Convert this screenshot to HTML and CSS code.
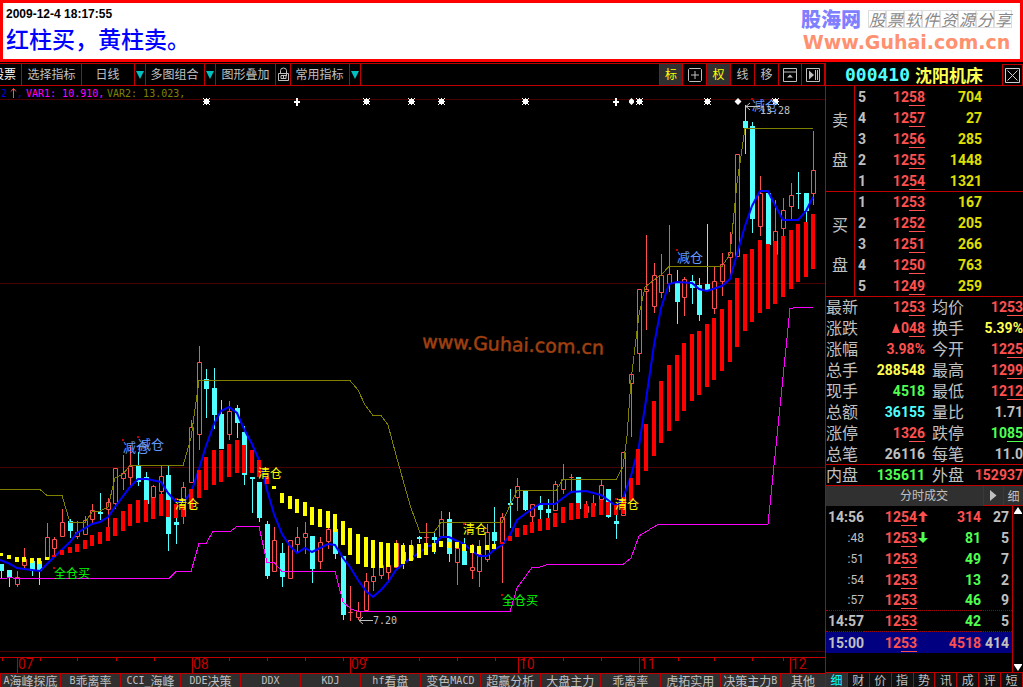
FILE: index.html
```html
<!DOCTYPE html>
<html lang="zh-CN">
<head>
<meta charset="utf-8">
<title>000410 沈阳机床</title>
<link rel="stylesheet" href="styles.css">
</head>
<body>
<header class="banner">
  <div class="note">
    <time class="stamp">2009-12-4 18:17:55</time>
    <h1 class="headline">红柱买，黄柱卖。</h1>
  </div>
  <div class="brand">
    <div class="brand-top"><strong class="brand-name">股海网</strong><span class="brand-boxes"><i>股</i><i>票</i><i>软</i><i>件</i><i>资</i><i>源</i><i>分</i><i>享</i></span></div>
    <div class="brand-url">Www.Guhai.com.cn</div>
  </div>
</header>
<div class="app">
  <main class="left">
    <nav class="toolbar">
      <button class="tool first">股票</button>
      <button class="tool w60">选择指标</button>
      <button class="tool w52">日线</button><button class="drop" aria-label="周期"></button>
      <button class="tool w58">多图组合</button><button class="drop" aria-label="组合"></button>
      <button class="tool w60">图形叠加</button>
      <button class="tool w15" aria-label="锁定"><svg width="13" height="15" viewBox="0 0 13 15"><path d="M3.500 6.500V3.500Q3.500 1 6.500 1T9.500 3.500V9M1.500 6.500H11.500V13.500H1.500ZM4 8.500H9V11.500H4ZM6.500 9V12" fill="none" stroke="#c0c0c0"/></svg></button>
      <button class="tool w58">常用指标</button><button class="drop last-drop" aria-label="指标"></button>
      <span class="spacer"></span>
      <button class="tool sq on edge">标</button>
      <button class="tool sq" aria-label="十字"><svg width="14" height="14" viewBox="0 0 14 14"><path d="M1.500.5H12.500L13.500 1.500V12.500L12.500 13.500H1.500L.5 12.500V1.500ZM7 3V11M3 7H11" fill="none" stroke="#c0c0c0"/></svg></button>
      <button class="tool sq on">权</button>
      <button class="tool sq">线</button>
      <button class="tool sq">移</button>
      <button class="tool sq narrow" aria-label="最大化"><svg width="14" height="14" viewBox="0 0 14 14"><path d="M.5.5H13.500V13.500H.5ZM.5 4H13.500" fill="none" stroke="#c0c0c0"/><path d="M4 9.500L7 6.500L10 9.500Z" fill="#c0c0c0"/></svg></button>
      <button class="tool sq narrow" aria-label="下一个"><svg width="14" height="14" viewBox="0 0 14 14"><path d="M.5.5H13.500V13.500H.5ZM9.500 2V12M11.500 2V12" fill="none" stroke="#c0c0c0"/><path d="M3 2.500L8 7L3 11.500Z" fill="#c0c0c0"/></svg></button>
    </nav>
    <svg class="chart" viewBox="0 86 825 587" role="img" aria-label="K线图">
      <path d="M0 99.500H825M0 283.500H825M0 467.500H825M0 651.500H825" stroke="#480000"/>
      <text class="wm" x="422" y="348" transform="rotate(2 422 348)">www.Guhai.com.cn</text>
      <g id="candles"></g>
      <polyline class="olive" points="0,489.500 40,489.500 47,495.500 62,495.500 70,522.500 85,522.500 92,512 100,511 108,507 115,478 123,474 130,465.500 183,465.500 191,438 199,380.500 350,380.500 358,390 365,405 373,415.500 381,415.500 388,425 396,455 403,480 411,508 420,532.500 434,532.500 441,522.500 502,522.500 517,490.500 556,490.500 563,479.500 616,479.500 623,467 627,436 631,380 639,315 645,287 661,275 669,266.500 722,266.500 730,254 737,183 745,128.500 813,128.500"/>
      <polyline class="blue" points="0,560 8,563 17,568 32,570 40,571 54,557 70,542 77,533 92,524 100,522 108,517 115,507 130,487 138,479 147,479 161,482 168,493 176,502 183,502 191,493 199,469 206,446 214,424 221,411 229,407 237,413 244,429 252,444 259,460 267,490 274,514 282,534 290,546 297,553 305,548 312,552 320,548 328,544 335,545 343,558 350,567 358,580 366,591 373,597 381,590 388,582 396,570 403,564 411,558 419,553 428,546 434,545 441,537 449,537 457,541 464,544 472,551 479,556 487,556 494,550 502,545 510,535 517,520 525,514 532,509 540,504 555,504 563,498 571,492 586,491 601,495 608,500 616,506 623,498 631,476 639,446 646,400 654,345 661,308 669,284 677,282 692,283 699,289 707,291 722,286 730,279 737,254 745,226 752,206 760,191 768,191 775,205 783,220 798,220 806,211 813,197"/>
      <polyline class="magenta" points="0,579 10,577.500 16,578.500 169,578.500 176,571.500 191,571.500 199,543.500 206,543.500 213,531.500 230,531.500 237,526.500 259,526.500 267,562.500 274,562.500 282,571.500 335,571.500 343,602 351,609 358,611.500 510,611.500 517,588 532,567.500 540,567 548,564.500 623,564.500 631,558 639,536 647,531 658,524.500 768,524.500 790,308.500 796,307.500 813,307.500"/>
      <g id="bars"></g>
      <g id="marks"></g>
      <text class="mono" x="1" y="97" fill="#0000e0">2</text>
      <path d="M13.500 98V89M11 91.500L13.500 88.500L16 91.500" fill="none" stroke="#ff5050"/>
      <text class="mono" x="17" y="97"><tspan fill="#0000e0">,</tspan></text>
      <text class="mono" x="26" y="97" fill="#f0f">VAR1: 10.910,</text>
      <text class="mono" x="107" y="97" fill="#808000">VAR2: 13.023,</text>
      <g class="tag">
        <g fill="#69f"><text class="big" x="123" y="452">减仓</text><text class="big" x="138" y="449">减仓</text><text class="big" x="677" y="262">减仓</text><text class="big" x="752" y="110">减仓</text></g>
        <g fill="#ff0"><text x="175" y="509">清仓</text><text x="258" y="478">清仓</text><text x="463" y="534">清仓</text><text x="615" y="509">清仓</text></g>
        <g fill="#0f0"><text x="54" y="578">全仓买</text><text x="502" y="605">全仓买</text></g>
      </g>
      <path d="M122 439h2v2h-2zM137 436h2v2h-2zM53 567h2v2h-2zM175 498h2v2h-2zM463 523h2v2h-2zM501 594h2v2h-2zM615 498h2v2h-2zM676 249h2v2h-2zM751 98h2v2h-2z" fill="#c00000"/>
      <g fill="none" stroke="#c0c0c0"><path d="M373 620.500H359M363 617L359 620.500L363 624M760 106.500H746M750 103L746 106.500L750 110"/></g>
      <text class="mono" x="373" y="624" fill="#c0c0c0">7.20</text>
      <text class="mono" x="760" y="114" fill="#c0c0c0">13.28</text>
      <path d="M0 657.500H825M2.500 658v3M17.500 658V673M40.500 658v3M77.500 658v3M116.500 658v3M154.500 658v3M192.500 658V673M199.500 658v3M229.500 658v3M267.500 658v3M305.500 658v3M343.500 658v3M350.500 658V673M366.500 658v3M419.500 658v3M457.500 658v3M495.500 658v3M518.500 658V673M524.500 658v3M563.500 658v3M601.500 658v3M639.500 658V673M643.500 658v3M678.500 658v3M714.500 658v3M752.500 658v3M783.500 658v3M790.500 658V673" fill="none" stroke="#c00000"/>
      <g class="month"><text x="18" y="669">07</text><text x="193" y="669">08</text><text x="351" y="669">09</text><text x="519" y="669">10</text><text x="640" y="669">11</text><text x="791" y="669">12</text></g>
    </svg>
    <nav class="tabs">
      <button><b>A</b>海峰探底</button><button><b>B</b>乖离率</button><button><b>CCI_</b>海峰</button><button><b>DDE</b>决策</button><button><b>DDX</b></button><button><b>KDJ</b></button><button><b>hf</b>看盘</button><button>变色<b>MACD</b></button><button>超赢分析</button><button>大盘主力</button><button>乖离率</button><button>虎拓实用</button><button>决策主力<b>B</b></button><button class="last">其他</button>
    </nav>
  </main>
  <aside class="panel">
    <div class="title"><h2><span class="code">000410</span><span class="name">沈阳机床</span></h2><button class="close" aria-label="关闭"><svg width="15" height="15" viewBox="0 0 15 15"><path d="M.5.5H14.500V14.500H.5ZM2.500 2.500L12.500 12.500M12.500 2.500L2.500 12.500" fill="none" stroke="#d0d0d0"/></svg></button></div>
    <table class="book">
      <tr><th rowspan="5">卖<br><br>盘</th><td class="lv">5</td><td class="pr">12<u>58</u></td><td class="vol">704</td><td></td></tr>
      <tr><td class="lv">4</td><td class="pr">12<u>57</u></td><td class="vol">27</td><td></td></tr>
      <tr><td class="lv">3</td><td class="pr">12<u>56</u></td><td class="vol">285</td><td></td></tr>
      <tr><td class="lv">2</td><td class="pr">12<u>55</u></td><td class="vol">1448</td><td></td></tr>
      <tr><td class="lv">1</td><td class="pr">12<u>54</u></td><td class="vol">1321</td><td></td></tr>
      <tr class="split"><th rowspan="5">买<br><br>盘</th><td class="lv">1</td><td class="pr">12<u>53</u></td><td class="vol">167</td><td></td></tr>
      <tr><td class="lv">2</td><td class="pr">12<u>52</u></td><td class="vol">205</td><td></td></tr>
      <tr><td class="lv">3</td><td class="pr">12<u>51</u></td><td class="vol">266</td><td></td></tr>
      <tr><td class="lv">4</td><td class="pr">12<u>50</u></td><td class="vol">763</td><td></td></tr>
      <tr><td class="lv">5</td><td class="pr">12<u>49</u></td><td class="vol">259</td><td></td></tr>
    </table>
    <table class="stats">
      <tr class="split"><th>最新</th><td class="r">12<u>53</u></td><th>均价</th><td class="r">12<u>53</u></td></tr>
      <tr><th>涨跌</th><td class="r"><span class="up"></span>0<u>48</u></td><th>换手</th><td class="y">5.39%</td></tr>
      <tr><th>涨幅</th><td class="r">3.98%</td><th>今开</th><td class="r">12<u>25</u></td></tr>
      <tr><th>总手</th><td class="y">288548</td><th>最高</th><td class="r">12<u>99</u></td></tr>
      <tr><th>现手</th><td class="g">4518</td><th>最低</th><td class="r">12<u>12</u></td></tr>
      <tr><th>总额</th><td class="c">36155</td><th>量比</th><td>1.71</td></tr>
      <tr><th>涨停</th><td class="r">13<u>26</u></td><th>跌停</th><td class="g">10<u>85</u></td></tr>
      <tr><th>总笔</th><td>26116</td><th>每笔</th><td>11.0</td></tr>
      <tr class="split"><th>内盘</th><td class="g">135611</td><th>外盘</th><td class="r">152937</td></tr>
    </table>
    <div class="sub"><h3>分时成交</h3><button aria-label="展开"><svg width="7" height="11" viewBox="0 0 7 11"><path d="M0 0L6.500 5.500L0 11Z" fill="#c0c0c0"/></svg></button><button>细</button></div>
    <div class="ticks">
      <table>
        <tr><td class="t">14:56</td><td class="p">12<u>54</u></td><td class="a"><svg width="10" height="11" viewBox="0 0 10 11"><path d="M5 0L10 5H6.500V11H3.500V5H0Z" fill="#ff5050"/></svg></td><td class="r v">314</td><td class="n">27</td></tr>
        <tr><td class="t s">:48</td><td class="p">12<u>53</u></td><td class="a"><svg width="10" height="11" viewBox="0 0 10 11"><path d="M5 11L10 6H6.500V0H3.500V6H0Z" fill="#50ff50"/></svg></td><td class="g v">81</td><td class="n">5</td></tr>
        <tr><td class="t s">:51</td><td class="p">12<u>53</u></td><td class="a"></td><td class="g v">49</td><td class="n">7</td></tr>
        <tr><td class="t s">:54</td><td class="p">12<u>53</u></td><td class="a"></td><td class="g v">13</td><td class="n">2</td></tr>
        <tr class="dot"><td class="t s">:57</td><td class="p">12<u>53</u></td><td class="a"></td><td class="g v">46</td><td class="n">9</td></tr>
        <tr class="dot"><td class="t">14:57</td><td class="p">12<u>53</u></td><td class="a"></td><td class="g v">42</td><td class="n">5</td></tr>
        <tr class="sel"><td class="t">15:00</td><td class="p">12<u>53</u></td><td class="a"></td><td class="r v">4518</td><td class="n">414</td></tr>
      </table>
      <div class="scroll"><button aria-label="向上"><svg width="8" height="9" viewBox="0 0 8 9"><path d="M4 0L8 6V7H0V6Z" fill="#fff"/></svg></button><button aria-label="向下"><svg width="8" height="9" viewBox="0 0 8 9"><path d="M4 9L8 3V2H0V3Z" fill="#fff"/></svg></button></div>
    </div>
    <nav class="ptabs"><button class="cur">细</button><button>财</button><button>价</button><button>指</button><button>势</button><button>讯</button><button>成</button><button>评</button><button>短</button></nav>
  </aside>
</div>
<script src="chart.js"></script>
</body>
</html>
```
FILE: styles.css
```css
* { box-sizing: border-box; }
body { margin: 0; background: #000; color: #c0c0c0; font: 12px "Liberation Sans", "Noto Sans CJK SC", sans-serif; min-height: 100vh; display: flex; flex-direction: column; overflow: hidden; }
button { appearance: none; background: none; border: 0; margin: 0; padding: 0; color: inherit; font: inherit; line-height: 1; display: flex; align-items: center; justify-content: center; white-space: nowrap; }
h1, h2, h3 { margin: 0; font-weight: normal; }

.banner { background: #fff; border: 3px solid #f00; height: 62px; display: flex; justify-content: space-between; }
.note { padding: 3px 0 0 3px; }
.stamp { display: block; font-size: 12px; font-weight: bold; line-height: 16px; color: #000; }
.headline { font: 500 23px/32px "Noto Sans CJK SC", sans-serif; color: #00f; }
.brand { padding: 4px 8px 0 0; }
.brand-top { display: flex; justify-content: space-between; gap: 7px; align-items: center; height: 24px; }
.brand-name { font: 900 20px/24px "Noto Sans CJK SC", sans-serif; color: #7f7fff; }
.brand-boxes { display: flex; }
.brand-boxes i { width: 18px; height: 18px; border: 1px solid #ddd; font: italic 16px/16px "Noto Sans CJK SC", sans-serif; color: #888; text-align: center; }
.brand-url { font: bold 19px/22px "DejaVu Sans", sans-serif; color: #ff9070; text-align: center; }

.app { flex: 1; margin-top: 1px; display: grid; grid-template-columns: minmax(0, 1fr) 198px; }
.left { display: flex; flex-direction: column; justify-content: space-between; }
.toolbar { height: 23px; display: flex; border: 1px solid #c00000; border-left: 0; border-right: 0; }
.tool { border-right: 1px solid #c00000; }
.first { width: 22px; justify-content: flex-end; padding-right: 5px; overflow: hidden; color: #fff; }
.w60 { width: 60px; }
.w52 { width: 52px; border-color: #000; }
.w58 { width: 58px; border-color: #000; }
.w15 { width: 15px; }
.drop { width: 12px; border-right: 1px solid #c00000; border-left: 1px solid #c00000; }
.drop::before { content: ""; border: 4px solid transparent; border-top: 8px solid #00c0c0; border-bottom: 0; }
.spacer { flex: 1; }
.sq { width: 24px; font-size: 12px; }
.sq.narrow { width: 23px; }
.sq.edge { border-left: 1px solid #c00000; }
.on { background: #303030; color: #ff0; }
.chart { display: block; width: 100%; height: auto; }
.chart text { font-family: "Noto Sans CJK SC", sans-serif; }
.chart .mono { font: 10px "DejaVu Sans Mono", monospace; }
.chart .wm { font: 19px "DejaVu Sans", sans-serif; fill: #a04010; stroke: #a04010; stroke-width: 0.5; }
.tag text { font-size: 12px; }
.tag .big { font-size: 13px; }
.chart .month text { font: 14px Roboto, sans-serif; fill: #c00000; }
.olive, .blue, .magenta { fill: none; }
.olive { stroke: #808000; shape-rendering: crispEdges; }
.blue { stroke: #00f; stroke-width: 2; }
.magenta { stroke: #f0f; shape-rendering: crispEdges; }
.up-line { stroke: #ff5050; }
.up-body { stroke: #ff5050; fill: #000; }
.down-line { stroke: #50ffff; }
.down-body { fill: #50ffff; }
.red-bar { fill: #f00; }
.yellow-bar { fill: #ff0; }
.tabs { display: flex; height: 14px; background: #303030; border-top: 1px solid #c00000; font-family: "Noto Sans CJK SC", sans-serif; }
.tabs button { flex: 60 1 0; min-width: 0; border-left: 1px solid #c00000; }
.tabs .last { flex-grow: 45; }
.tabs b { font: 10px "DejaVu Sans Mono", monospace; }

.panel { border-left: 1px solid #c00000; display: flex; flex-direction: column; min-width: 0; overflow: hidden; }
.title { height: 23px; border-bottom: 1px solid #c00000; border-top: 1px solid #000; display: flex; justify-content: space-between; }
.title h2 { display: flex; align-items: center; gap: 5px; padding-left: 19px; font-weight: bold; line-height: 20px; }
.code { font: bold 18px/20px "DejaVu Sans Mono", monospace; color: #50ffff; }
.name { font: bold 17px/20px "Noto Sans CJK SC", sans-serif; color: #ffff50; }
.close { width: 21px; border: 1px solid #c00000; border-bottom: 0; }
table { border-collapse: separate; border-spacing: 0; table-layout: fixed; width: 100%; font: bold 14px/20px Roboto, sans-serif; }
td, th { padding: 0; height: 21px; text-align: right; white-space: nowrap; }
th { font: 16px/18px "Noto Sans CJK SC", sans-serif; }
u { text-underline-offset: 3px; text-decoration-thickness: 1px; text-decoration-skip-ink: none; }
.book th { width: 29px; text-align: center; line-height: 20px; border-right: 1px solid #c00000; }
.split td, .split th { border-top: 1px solid #c00000; }
.book .lv { width: 14px; padding-left: 3px; text-align: left; }
.pr, .r, .p { color: #ff5050; }
.book .pr { width: 56px; }
.book .vol { width: 57px; color: #e0e000; }
.stats th { width: 32px; text-align: left; }
.stats td { width: 67px; }
.stats th + td + th { width: 39px; padding-left: 7px; }
.stats td:last-child { width: 59px; }
.stats th { padding-bottom: 2px; }
.y { color: #ffff50; }
.g { color: #50ff50; }
.c { color: #50ffff; }
.up { display: inline-block; border: 4px solid transparent; border-bottom: 10px solid #ff5050; border-top: 0; margin-right: 1px; }
.sub { height: 21px; display: flex; border-top: 1px solid #c00000; background: #303030; font-family: "Noto Sans CJK SC", sans-serif; }
.sub h3 { flex: 1; padding-left: 39px; text-align: center; font-size: 12px; line-height: 18px; }
.sub button { width: 20px; border: 1px solid #c00000; border-top: 0; border-right: 0; }
.ticks { flex: 1; display: flex; }
.ticks table { flex: 1; align-self: flex-start; width: auto; }
.ticks .t { width: 38px; }
.ticks .s { font: 12px Roboto, sans-serif; }
.ticks .p { width: 53px; }
.ticks .a { width: 12px; text-align: center; }
.ticks .a svg { display: block; margin-left: 1px; }
.ticks .n { padding-right: 3px; width: 31px; }
.dot td { border-bottom: 1px dotted #a00000; }
.sel td { background: #000080; }
.scroll { width: 11px; border-left: 1px solid #c00000; display: flex; flex-direction: column; justify-content: space-between; padding: 1px 0; }
.ptabs { height: 15px; display: flex; border-top: 1px solid #c00000; background: #101010; font-family: "Noto Sans CJK SC", sans-serif; }
.ptabs button { flex: 1; border-right: 1px solid #c00000; }
.ptabs .cur { background: #303030; color: #00ffff; }
```
FILE: chart.js
```js
// Each candle: direction (u/d), x, high, body top, body bottom, low.
const candles = `d1,564,564,571,579 d9,570,570,577,587 u17,571,577,585,587 u24,548,559,566,568 d32,561,561,571,576 d39,561,561,571,585
u47,523,537,560,560 u54,537,539,549,556 u62,509,522,537,537 d70,519,521,531,538 u77,521,532,537,539 u85,516,520,535,535
u92,504,510,520,524 d100,493,512,514,520 u108,498,502,510,527 u115,468,468,504,509 u123,455,473,479,490 u130,445,466,478,486
d138,452,465,482,486 d146,472,477,504,504 u153,485,486,498,504 u161,466,476,492,494 d168,465,475,534,551 d176,517,522,525,544
u183,482,487,517,524 u191,420,427,483,483 u199,346,362,435,450 d206,369,379,389,418 d214,368,388,415,429 d221,400,414,449,449
u229,401,411,435,440 d237,405,408,423,438 d244,426,432,475,485 d252,477,477,479,513 d259,482,482,518,522 d267,521,524,576,579
u274,527,540,572,572 d282,543,553,577,587 u290,540,540,579,579 u297,527,537,545,552 u305,522,533,538,554 d312,536,536,569,583
u320,537,542,562,569 u328,528,529,542,549 d335,529,529,554,559 d343,556,556,615,620 u350,586,612,613,621 u358,602,611,618,620
u366,573,581,611,611 u373,566,576,582,591 u381,565,565,576,579 u388,565,565,573,581 u396,540,543,568,568 d403,543,552,562,569
u411,540,546,560,560 d419,536,537,539,543 u426,523,537,537,543 d434,533,537,540,554 u441,511,519,537,537 d449,512,519,554,562
u457,542,548,563,585 d464,538,551,565,565 u472,544,567,571,579 u479,540,554,572,587 u487,524,532,560,562 d494,507,532,541,547
u502,513,517,544,583 d510,489,503,505,528 u517,478,486,498,511 d525,491,491,510,511 u532,504,504,517,522 d540,496,505,510,519
d548,499,509,513,519 u555,481,484,511,511 u563,464,479,490,494 u571,474,477,477,493 d578,477,477,509,509 u586,501,506,513,513
u593,495,503,506,506 u601,480,485,500,500 d608,489,489,517,518 d616,507,521,524,539 u623,452,452,516,516 u631,374,374,384,437
u639,289,289,354,372 u646,235,289,292,330 u654,263,275,307,313 u661,254,275,293,298 u669,225,274,284,292 d677,270,282,302,324
u684,277,279,298,316 d692,275,281,288,304 d699,278,285,315,321 d707,224,284,291,291 u714,267,281,309,314 u722,253,264,282,296
u730,232,252,258,275 u737,154,154,257,257 d745,105,121,128,154 d752,122,126,219,233 u760,176,193,227,236 d768,193,193,245,266
u775,200,231,255,272 u783,198,210,229,236 u791,183,195,207,220 d798,172,193,194,209 d806,193,193,211,222 u813,131,170,194,205`;

// Each bar: colour (r/y), x, top, bottom.
const bars = `y1,553,556 y9,555,559 y17,557,562 y24,557,562 y32,558,563 y39,558,564 y47,557,560 r54,555,557 r62,550,555 r70,547,553 r77,544,552
r85,540,549 r92,535,546 r100,532,544 r108,527,541 r115,518,536 r123,511,531 r130,504,526 r138,500,523 r146,500,522 r153,498,519
r161,494,516 r168,500,517 r176,504,518 r183,506,517 r191,489,509 r199,470,498 r206,457,490 r214,450,485 r221,450,482 r229,444,477
r237,440,473 r244,445,473 r252,450,473 r259,460,477 r267,477,484 y274,486,489 y282,493,503 y290,496,509 y297,499,513 y305,502,516
y312,507,525 y320,509,527 y328,511,528 y335,514,532 y343,521,545 y350,528,555 y358,534,564 y366,537,567 y373,540,568 y381,542,568
y388,543,567 y396,543,567 y403,545,564 y411,545,561 y419,544,558 y426,543,555 y434,543,552 y441,541,547 y449,542,548 y457,542,548
y464,544,551 y472,545,553 y479,546,554 y487,545,550 y494,544,549 r502,542,544 r510,536,541 r517,528,537 r525,525,535 r532,522,533
r540,519,531 r548,518,530 r555,513,527 r563,507,523 r571,503,520 r578,503,519 r586,504,518 r593,503,517 r601,500,515 r608,502,515
r616,505,515 r623,497,514 r631,478,501 r638,449,485 r646,424,471 r654,401,456 r661,381,443 r669,365,431 r677,355,421 r684,343,411
r692,334,401 r699,331,395 r707,324,387 r714,318,380 r722,309,371 r730,300,362 r737,278,347 r745,254,331 r752,249,322 r760,240,313
r768,244,309 r775,241,304 r783,236,297 r791,230,289 r798,224,282 r806,222,277 r813,214,269`;

const parse = text => text.split(/\s+/).map(s => [s[0], ...s.slice(1).split(",").map(Number)]);
const path = (cls, d) => `<path class="${cls}" d="${d}"/>`;

document.getElementById("candles").innerHTML = parse(candles).map(([dir, x, high, top, bottom, low]) => {
  const wick = `M${x + 0.5} ${high}V${low}`;
  return dir === "u"
    ? path("up-line", wick) + path("up-body", `M${x - 1.5} ${top + 0.5}h4V${Math.max(bottom, top + 1) - 0.5}h-4Z`)
    : path("down-line", wick) + path("down-body", `M${x - 2} ${top}h5V${bottom}h-5Z`);
}).join("");

document.getElementById("bars").innerHTML = parse(bars).map(([c, x, top, bottom]) =>
  path(c === "r" ? "red-bar" : "yellow-bar", `M${x - 2} ${top}h4V${bottom}h-4Z`)
).join("");

const star = x => `M${x - 2} 99h5v5h-5ZM${x - 3} 98h1v1h-1ZM${x} 98h1v1h-1ZM${x + 3} 98h1v1h-1ZM${x - 3} 101h7v1h-7ZM${x - 3} 104h1v1h-1ZM${x} 104h1v1h-1ZM${x + 3} 104h1v1h-1Z`;
const plus = x => `M${x} 98h2v3h2v2h-2v3h-2v-3h-2v-2h2Z`;
const diamond = x => `M${x} 98l3.500 3.500l-3.500 3.500l-3.500 -3.500Z`;
document.getElementById("marks").innerHTML = `<path fill="#fff" d="${
  [206, 366, 411, 441, 525, 639, 707, 775].map(star).join("") + [296, 615].map(plus).join("") + diamond(738) + "M631.500 98l2.500 2.500v2l-2.500 2.500l-2.500 -2.500v-2Z"
}"/>`;
```
